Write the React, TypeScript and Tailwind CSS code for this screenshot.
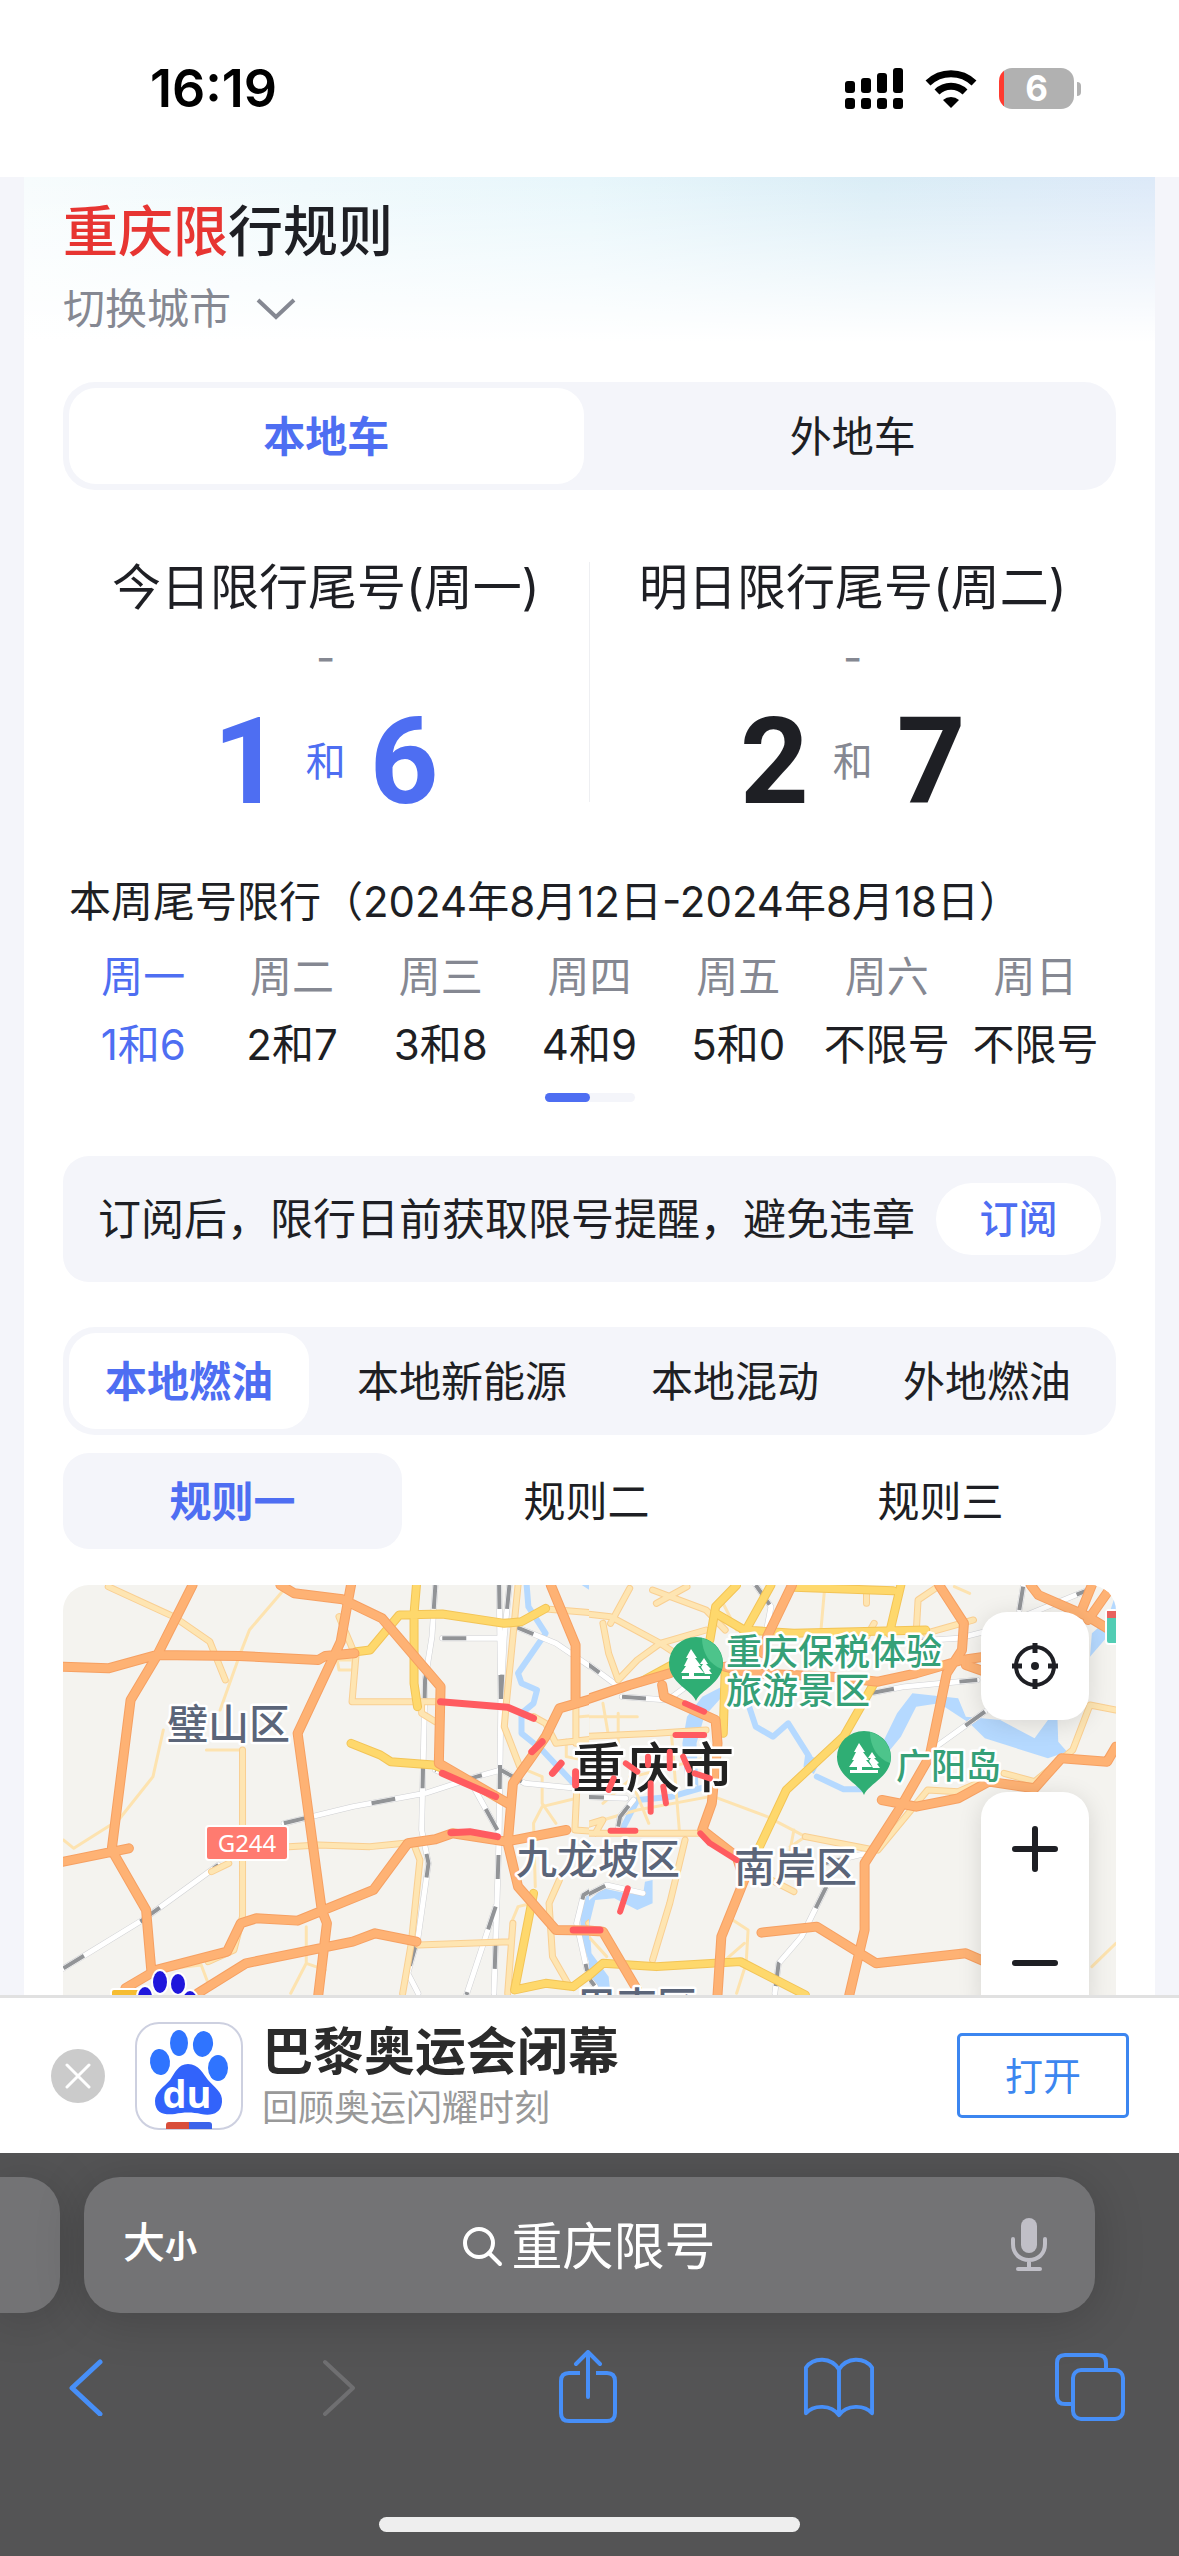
import type { ReactNode } from 'react';

const WEEK = [
  { day: '周一', rule: '1和6' },
  { day: '周二', rule: '2和7' },
  { day: '周三', rule: '3和8' },
  { day: '周四', rule: '4和9' },
  { day: '周五', rule: '5和0' },
  { day: '周六', rule: '不限号' },
  { day: '周日', rule: '不限号' },
];

const VEHICLES = ['本地燃油', '本地新能源', '本地混动', '外地燃油'];
const RULES = ['规则一', '规则二', '规则三'];

const ZOOM_BUTTONS = [
  { label: '放大', d: 'M3 23 H43 M23 3 V43' },
  { label: '缩小', d: 'M3 23 H43' },
];

type Tile = {
  transform: string;
  clip: string;
  water: string[];
  lake: string;
  minor: string[];
  light: string[];
  yellow: string[];
  orange: string[];
  rail: string[];
};

// the map is stored as two tiles, each with its own coordinate grid
const WEST: Tile = {
  transform: 'translate(-3 -15) scale(0.3444 0.3333)',
  clip: 'west',
  water: [
    'M1355 45 L1360 110 L1410 190 L1330 310 L1340 340 L1385 360 L1375 400 L1340 430 L1340 490 L1400 540 L1500 650',
  ],
  lake: 'M1568 950 L1525 975 L1510 1040 L1515 1110 L1540 1190 L1568 1210 L1568 1160 L1540 1110 L1540 1030 L1568 1000Z M1515 45 L1540 62 L1568 55 V45Z',
  minor: [
    'M645 65 L550 180 L520 260 L465 420',
    'M300 480 L270 620 L170 750 L40 835 L10 810',
    'M425 540 H530',
    'M715 1070 V1180 L670 1270 M715 1180 L770 1200',
    'M330 1195 L410 1185 L430 1240',
    'M1330 590 L1400 620 L1400 700 L1440 760 M1400 710 L1500 685 M1400 710 L1375 760 L1380 950',
    'M1470 510 V560 L1520 570 M1510 440 L1568 435',
    'M1310 1060 L1330 1010 L1370 1000',
    'M805 270 H850 V300 H810Z',
  ],
  light: [
    'M140 50 L330 140 L435 215 L480 330',
    'M860 250 L848 395 H1105',
    'M530 540 V1040 L505 1140 L430 1175',
    'M665 830 L750 825 L900 830 L1000 820',
    'M1030 830 L1045 870 L1020 1120 L995 1270',
    'M1040 1125 L1310 1115',
    'M1330 45 L1295 410 L1290 470 L1335 590',
    'M1315 1060 L1300 1270',
    'M1420 118 L1568 130',
    'M1450 930 L1420 1000 L1430 1160 L1480 1250',
    'M810 140 L855 250',
    'M1375 440 L1410 460 L1440 520 L1568 505',
    'M1498 400 V520 M1500 670 L1495 780 L1568 785',
    'M1050 400 L1050 430 L1090 455',
    'M1535 1060 L1568 1040',
    'M440 905 L490 880',
  ],
  yellow: [
    'M1035 45 L1028 130 L1028 340 L1038 410',
    'M860 245 L900 240 L985 135 L1110 132 L1290 160 L1340 155 L1410 115',
    'M845 520 L930 555 L960 575 L1085 585 L1135 605',
    'M1375 970 L1320 1260 L1410 1240 L1490 1250 L1568 1190',
  ],
  orange: [
    'M385 45 L280 260 L205 390 L150 840 L250 1020 L265 1200',
    'M10 290 L140 295 L280 255 L520 258 L750 270 L770 258 L855 250',
    'M10 875 L200 835',
    'M845 45 L835 100 L815 215 L690 490 L760 1020 L775 1060 L750 1275',
    'M640 45 L680 70 L820 88 L935 145 L1105 350 L1100 580 L1300 700',
    'M190 1255 L280 1200 L485 1145 L525 1060 L570 1045 L690 1052 L910 960 L1010 820 L1090 808 L1140 790 L1295 815 L1470 780',
    'M400 1270 L540 1180 L850 1115 L915 1090 L1035 1115',
    'M1425 45 L1497 225 L1497 400',
    'M1568 380 L1450 415 L1410 500 L1370 560 L1315 640 L1300 820 L1330 950 L1440 1080 L1568 1082',
  ],
  rail: [
    'M10 1195 L240 1050 L460 885',
    'M650 760 L850 710 L1060 670 L1210 620 L1280 600',
    'M1090 45 L1080 200 L1060 330 L1050 780 L1070 880 L1040 1100 L1010 1210 L1040 1270',
    'M1275 45 L1280 400 L1275 800 L1260 1270',
    'M1305 45 L1290 200 L1280 400',
    'M1110 205 H1270',
    'M1310 165 L1440 220 L1568 310',
    'M1280 600 L1350 640 L1500 655',
    'M1270 780 L1200 650 L1090 600',
    'M1265 1010 L1180 1275',
    'M1568 945 L1520 975 L1500 1060 L1530 1200 L1568 1240',
  ],
};

const EAST: Tile = {
  transform: 'translate(517 -15) scale(0.382 0.3333)',
  clip: 'east',
  water: [
    'M440 400 L460 470 L505 500 L545 460 L600 560',
    'M330 650 L240 680 L150 690 L110 780',
    'M620 620 L690 658 L740 658',
  ],
  lake: 'M380 345 L320 380 L280 440 L268 520 L275 620 L310 650 L305 520 L325 440 L380 370Z M590 550 L630 572 L612 612 L585 590Z M800 500 L830 430 L870 370 L990 385 L1010 440 L1100 450 L1190 505 L1225 450 L1250 450 L1252 515 L1275 545 L1225 565 L1060 505 L1020 460 L940 400 L880 410 L840 500 L790 570 L770 570Z M1403 70 L1380 150 L1340 190 L1335 260 L1403 170Z M190 930 L190 1000 L150 1020 L90 985 L40 990 L25 1060 L30 1150 L75 1220 L80 1275 L40 1250 L5 1150 L5 1010 L60 955 L120 970 L165 975 L170 935Z',
  minor: [
    'M350 680 L490 740 L590 800',
    'M0 440 H150 M20 430 V560 M100 430 V520 M60 400 L75 500',
    'M60 750 L150 720 L340 680',
    'M240 500 L260 780',
    'M560 780 L550 840 M590 800 L550 830',
    'M1340 1190 L1403 1120',
    'M400 1050 L440 1080 L435 1180 L410 1270',
    'M370 90 L410 180 M640 60 L630 190',
    'M15 1090 L70 1160 M430 1120 L370 1180',
    'M340 560 L140 620 L60 700 M130 620 L180 760',
    'M980 50 L1020 70',
  ],
  light: [
    'M0 130 L80 140 L210 220 L330 180',
    'M60 160 L75 250 L100 330',
    'M130 55 L80 160',
    'M200 100 L280 50 M190 60 L330 120 L380 180 M100 330 L150 270 L210 220 L270 265',
    'M880 190 L885 90 L930 55',
    'M905 190 L1030 150',
    'M590 800 L770 840',
    'M1403 420 L1335 405 L1290 540 L1190 635 L1110 610',
    'M780 840 L910 660 L990 665 L1070 625',
    'M0 790 H310',
    'M275 810 L235 1000 L190 1170',
    'M500 930 L560 965',
    'M0 500 L200 490 L330 480',
    'M750 60 V100 M770 160 L750 200',
    'M0 770 L60 750 L40 790',
  ],
  yellow: [
    'M410 45 L355 110 L340 210',
    'M500 45 L410 230',
    'M355 130 L430 180 L560 190 L905 180',
    'M560 52 L820 62',
    'M840 45 L810 190',
    'M380 300 L375 490',
    'M770 340 L690 500 L540 660 L470 830',
    'M0 1240 L60 1180 L200 1190 L420 1175 L590 1275',
    'M160 335 L240 285',
  ],
  orange: [
    'M0 395 L130 345 L235 310',
    'M215 345 L220 380 L355 450 L360 520 L345 700 L320 780 L410 860 L430 930 L370 1100 L360 1275',
    'M555 45 L490 200 L480 250',
    'M380 290 L450 310 L660 320 L780 335 L880 310 L1000 270 L1060 260',
    'M940 45 L1005 160 L1000 240 L960 310 L915 560 L840 710 L745 880 L745 1080 L705 1275',
    'M790 690 L880 710 L990 685 L1070 635 L1190 655 L1260 565 L1380 575 L1403 530',
    'M475 1088 L620 1070 L775 1180 L1010 1150 L1060 1175',
    'M0 1080 L60 1085 L150 1260',
    'M1180 45 L1200 75 L1330 140 L1380 175',
    'M1340 45 L1310 130 M1385 60 L1330 150',
    'M1010 285 L1060 305',
  ],
  rail: [
    'M0 265 L95 345',
    'M110 380 L230 390 L290 340',
    'M460 45 L500 110 L490 170',
    'M850 215 L990 205 L1060 185 L1180 130 L1330 60',
    'M760 370 L850 350 L1040 330',
    'M1150 120 L1160 50',
    'M1060 425 L920 540',
    'M645 950 L580 1100 L520 1180 L510 1270 M640 880 L750 850',
    'M0 680 L120 685',
    'M100 770 L105 740 L140 690',
    'M10 980 L70 945 L165 970',
    'M0 1190 L40 1250',
  ],
};

const WEST_JAMS = [
  'M1105 395 L1300 412 L1375 445',
  'M1110 610 L1265 680',
  'M1135 788 L1190 785 L1270 800',
  'M1370 545 L1400 515',
  'M1430 610 L1455 580',
  'M1490 1080 H1568',
  'M1497 605 V645',
];

const EAST_JAMS = [
  'M275 400 L325 425',
  'M250 495 H325',
  'M80 782 H145',
  'M315 790 L340 820 L410 870',
  'M125 955 L105 1025',
  'M185 640 V725',
  'M218 650 L225 700',
  'M75 660 L88 625',
  'M120 580 L150 605',
  'M235 545 V595 M178 560 V585',
  'M270 560 L285 600',
  'M300 610 L340 625',
  'M0 1080 H37',
];

function Strokes({ paths, color, width, dash }: { paths: string[]; color: string; width: number; dash?: string }) {
  return (
    <path
      d={paths.join(' ')}
      fill="none"
      stroke={color}
      strokeWidth={width}
      strokeDasharray={dash}
      strokeLinejoin="round"
      strokeLinecap={dash ? 'butt' : 'round'}
      vectorEffect="non-scaling-stroke"
    />
  );
}

function MapTile({ tile }: { tile: Tile }) {
  return (
    <g clipPath={`url(#${tile.clip})`}>
      <g transform={tile.transform}>
        <path d={tile.lake} fill="#b5d9ff" />
        <Strokes paths={tile.water} color="#b5d9ff" width={6} />
        <Strokes paths={tile.minor} color="#fde3b0" width={3} />
        <Strokes paths={tile.rail} color="#cfd0d3" width={6} />
        <Strokes paths={tile.rail} color="#ffffff" width={5} />
        <Strokes paths={tile.rail} color="#929497" width={4} dash="24 66" />
        <Strokes paths={tile.light} color="#f9cf92" width={7} />
        <Strokes paths={tile.light} color="#fee5b2" width={5} />
        <Strokes paths={tile.yellow} color="#f3c456" width={9} />
        <Strokes paths={tile.yellow} color="#fed86c" width={7} />
        <Strokes paths={tile.orange} color="#f6a062" width={10} />
        <Strokes paths={tile.orange} color="#feb274" width={8} />
      </g>
    </g>
  );
}

function MapLabel({ x, y, size, color, children }: { x: number; y: number; size: number; color: string; children: ReactNode }) {
  return (
    <text
      x={x}
      y={y}
      fontSize={size}
      fill={color}
      stroke="#ffffff"
      strokeWidth="5"
      strokeLinejoin="round"
      paintOrder="stroke"
      fontWeight="500"
    >
      {children}
    </text>
  );
}

function ParkPin({ x, y }: { x: number; y: number }) {
  return (
    <g transform={`translate(${x} ${y})`}>
      <path d="M0 38 C-4 27 -27 20 -27 0 A27 26 0 0 1 27 0 C27 20 4 27 0 38Z" fill="#2fae74" />
      <path d="M6 -25 A27 26 0 0 1 26 6 C14 2 6 -10 6 -25Z" fill="#4dc48b" />
      <path d="M-5 -14 L1 -5 H-1 L5 3 H2 L8 10 H-2 V13 H14 V16 H-14 V13 H-7 V10 H-15 L-10 3 H-12 L-8 -5 H-10Z" fill="#fff" />
      <path d="M8 -5 L12 1 H10 L15 6 L13 7 L16 11 H9 L5 4 L7 1 H4Z" fill="#fff" />
    </g>
  );
}

function CityMap() {
  return (
    <svg viewBox="0 0 1053 620" preserveAspectRatio="xMinYMin slice" className="block h-full w-full" role="img" aria-label="重庆限行地图">
      <clipPath id="west">
        <rect width="526" height="620" />
      </clipPath>
      <clipPath id="east">
        <rect x="526" width="527" height="620" />
      </clipPath>
      <rect width="1053" height="620" fill="#f4f3ef" />
      <MapTile tile={WEST} />
      <MapTile tile={EAST} />

      <MapLabel x={104} y={154} size={41} color="#5b6579">璧山区</MapLabel>
      <MapLabel x={453} y={289} size={41} color="#5b6579">九龙坡区</MapLabel>
      <MapLabel x={671} y={297} size={41} color="#5b6579">南岸区</MapLabel>
      <MapLabel x={514} y={436} size={40} color="#5b6579">巴南区</MapLabel>
      <MapLabel x={509} y={203} size={54} color="#222222">重庆市</MapLabel>
      <MapLabel x={663} y={80} size={36} color="#35a077">重庆保税体验</MapLabel>
      <MapLabel x={663} y={119} size={36} color="#35a077">旅游景区</MapLabel>
      <MapLabel x={833} y={194} size={35} color="#35a077">广阳岛</MapLabel>

      <g transform={WEST.transform}>
        <Strokes paths={WEST_JAMS} color="#ff5b60" width={7} />
      </g>
      <g transform={EAST.transform}>
        <Strokes paths={EAST_JAMS} color="#ff5b60" width={6} />
      </g>

      <ParkPin x={633} y={78} />
      <ParkPin x={801} y={172} />

      <rect x="143" y="241" width="82" height="34" rx="3" fill="#ff7b70" stroke="#fff" strokeWidth="2" />
      <text x="184" y="267" fontSize="24" fill="#fff" textAnchor="middle" className="font-['Noto_Sans']">G244</text>

      <rect x="1043" y="25" width="14" height="34" rx="3" fill="#52cdb4" stroke="#fff" strokeWidth="2" />
      <rect x="1044" y="26" width="12" height="7" fill="#e8635f" />

      <rect x="48" y="404" width="30" height="20" rx="3" fill="#f6bd32" stroke="#fff" strokeWidth="2" />
      <g fill="#2017dc" stroke="#fff" strokeWidth="4" paintOrder="stroke">
        <ellipse cx="97" cy="397" rx="7" ry="11" />
        <ellipse cx="115" cy="399" rx="7" ry="10" />
        <ellipse cx="82" cy="412" rx="7" ry="10" />
        <ellipse cx="127" cy="416" rx="7" ry="10" />
        <ellipse cx="105" cy="428" rx="15" ry="14" />
      </g>
    </svg>
  );
}

function StatusBar() {
  return (
    <header className="flex h-[177px] shrink-0 items-center justify-between bg-white pr-[98px] pl-[150px]">
      <time className="text-[52px] leading-[60px] font-semibold text-black">16:19</time>
      <div className="flex items-center gap-[22px]">
        <svg width="58" height="42" viewBox="0 0 58 42" aria-label="信号">
          <rect x="0" y="13" width="10" height="12" rx="3" />
          <rect x="16" y="10" width="10" height="15" rx="3" />
          <rect x="32" y="5" width="10" height="20" rx="3" />
          <rect x="48" y="0" width="10" height="25" rx="3" />
          <rect x="0" y="30" width="10" height="11" rx="3" />
          <rect x="16" y="30" width="10" height="11" rx="3" />
          <rect x="32" y="30" width="10" height="11" rx="3" />
          <rect x="48" y="30" width="10" height="11" rx="3" />
        </svg>
        <svg width="52" height="38" viewBox="0 0 52 38" aria-label="无线网络">
          <path d="M3 13 A33 33 0 0 1 49 13" fill="none" stroke="#000" strokeWidth="7" />
          <path d="M12 22 A20 20 0 0 1 40 22" fill="none" stroke="#000" strokeWidth="7" />
          <path d="M26 38 L18 30 A12 12 0 0 1 34 30Z" />
        </svg>
        <div className="flex items-center gap-[3px]">
          <span className="flex h-[41px] w-[75px] items-center justify-center rounded-[13px] bg-[linear-gradient(to_right,#ff3b30_5px,#b1b1b1_5px)] text-[35px] leading-[41px] font-bold text-white">
            6
          </span>
          <span className="h-[14px] w-[4px] rounded-r-full bg-[#b1b1b1]" />
        </div>
      </div>
    </header>
  );
}

function DayCard({ title, numbers, active }: { title: string; numbers: [string, string]; active?: boolean }) {
  return (
    <div className="flex flex-col items-center">
      <h2 className="text-[49px] leading-[52px]">{title}</h2>
      <p className="mt-5 text-[42px] leading-[48px] text-[#858892]">-</p>
      <p className={active ? 'mt-[40px] flex items-center gap-[24px] text-[#4e6ef2]' : 'mt-[40px] flex items-center gap-[24px]'}>
        <b className="w-[70px] text-right font-['Roboto'] text-[120px] leading-[80px] font-bold">{numbers[0]}</b>
        <span className={active ? 'text-[40px] leading-[80px]' : 'text-[40px] leading-[80px] text-[#858892]'}>和</span>
        <b className="w-[70px] font-['Roboto'] text-[120px] leading-[80px] font-bold">{numbers[1]}</b>
      </p>
    </div>
  );
}

function AppBanner() {
  return (
    <aside className="flex h-[158px] shrink-0 items-center border-t-[3px] border-[#e1e1e1] bg-white pr-[50px] pl-[51px]">
      <button aria-label="关闭" className="flex size-[54px] items-center justify-center rounded-full bg-[#cbcbcb]">
        <svg width="26" height="26" viewBox="0 0 26 26" fill="none" stroke="#fff" strokeWidth="3" strokeLinecap="round">
          <path d="M2 2 L24 24 M24 2 L2 24" />
        </svg>
      </button>
      <svg width="108" height="108" viewBox="0 0 108 108" className="ml-[30px]" aria-label="百度">
        <rect x="1" y="1" width="106" height="106" rx="23" fill="#fff" stroke="#cdd0e0" strokeWidth="2" />
        <g fill="#2f74ff">
          <ellipse cx="44" cy="21" rx="9" ry="13" />
          <ellipse cx="68" cy="22" rx="10" ry="13" transform="rotate(8 68 22)" />
          <ellipse cx="25" cy="40" rx="10" ry="13" transform="rotate(-6 25 40)" />
          <ellipse cx="83" cy="46" rx="10" ry="13" />
        </g>
        <path d="M53 42 C64 42 68 52 73 58 C79 65 88 70 87 80 C86 92 76 94 66 92 C58 90 48 90 40 92 C30 93 20 92 20 79 C20 70 29 65 35 58 C40 51 43 42 53 42Z" fill="#3263fb" />
        <text x="52" y="86" fontSize="38" fontWeight="700" fill="#fff" textAnchor="middle" className="font-['Open_Sans']">du</text>
        <path d="M31 107 V103 Q31 100 34 100 H54 V107Z" fill="#d94e3a" />
        <path d="M54 100 H74 Q77 100 77 103 V107 H54Z" fill="#3b63ea" />
      </svg>
      <div className="ml-[19px] flex-1 pt-[7px]">
        <p className="text-[51px] leading-[58px] font-bold text-[#2b2b2b]">巴黎奥运会闭幕</p>
        <p className="text-[36px] leading-[54px] text-[#999999]">回顾奥运闪耀时刻</p>
      </div>
      <button className="h-[85px] w-[172px] rounded-[5px] border-[3px] border-[#3c86f0] text-[38px] leading-[40px] text-[#3c86f0]">打开</button>
    </aside>
  );
}

function BrowserBar() {
  return (
    <footer className="shrink-0 overflow-hidden bg-[#545455] pb-[24px]">
      <div className="flex gap-[24px] pt-[24px] pr-[84px]">
        <div className="h-[136px] w-[60px] rounded-r-[36px] bg-[#737375] shadow-[0_6px_50px_rgba(0,0,0,0.18)]" />
        <div className="grid h-[136px] flex-1 grid-cols-[1fr_auto_1fr] items-center rounded-[36px] bg-[#737375] px-[39px] text-white shadow-[0_6px_50px_rgba(0,0,0,0.18)]">
          <button aria-label="页面设置" className="flex items-baseline">
            <span className="text-[42px] leading-[60px] font-medium">大</span>
            <span className="text-[32px] leading-[60px] font-bold">小</span>
          </button>
          <label className="flex items-center gap-[8px] pt-1">
            <svg width="42" height="42" viewBox="0 0 42 42" fill="none" stroke="#fff" strokeWidth="4" strokeLinecap="round" aria-hidden="true">
              <circle cx="17" cy="17" r="14" />
              <path d="M27 27 L38 38" />
            </svg>
            <input type="text" aria-label="搜索" defaultValue="重庆限号" className="w-[206px] bg-transparent text-[51px] leading-[68px] outline-none" />
          </label>
          <button aria-label="语音输入" className="mr-[9px] justify-self-end">
            <svg width="36" height="54" viewBox="0 0 36 54" fill="none" stroke="#c0bfc7" strokeLinecap="round">
              <rect x="10" y="0" width="16" height="35" rx="8" fill="#c0bfc7" stroke="none" />
              <path d="M2 21 V26 C2 36 9 42 18 42 C27 42 34 36 34 26 V21 M18 42 V51" strokeWidth="4" />
              <path d="M7 51 H29" strokeWidth="4" />
            </svg>
          </button>
        </div>
      </div>
      <nav aria-label="浏览器" className="mt-[36px] flex h-[76px] items-center justify-between pr-[54px] pl-[51px]">
        <button aria-label="后退" className="flex w-[70px] justify-center">
          <svg width="36" height="58" viewBox="0 0 36 58" fill="none" stroke="#478ff8" strokeWidth="5" strokeLinecap="round" strokeLinejoin="round">
            <path d="M32 4 L4 30 L32 56" />
          </svg>
        </button>
        <button aria-label="前进" disabled className="flex w-[70px] justify-center">
          <svg width="36" height="58" viewBox="0 0 36 58" fill="none" stroke="#6f6f71" strokeWidth="4" strokeLinecap="round" strokeLinejoin="round">
            <path d="M6 4 L34 30 L6 56" />
          </svg>
        </button>
        <button aria-label="分享" className="flex w-[70px] justify-center">
          <svg width="58" height="74" viewBox="0 0 58 74" fill="none" stroke="#478ff8" strokeWidth="4" strokeLinecap="round" strokeLinejoin="round">
            <path d="M21 23 H10 Q2 23 2 31 V63 Q2 71 10 71 H48 Q56 71 56 63 V31 Q56 23 48 23 H37" strokeLinecap="butt" />
            <path d="M29 47 V2 M17 14 L29 2 L41 14" />
          </svg>
        </button>
        <button aria-label="书签" className="flex w-[70px] justify-center">
          <svg width="70" height="62" viewBox="0 0 72 62" fill="none" stroke="#478ff8" strokeWidth="4" strokeLinejoin="round">
            <path d="M36 13 C28 0 10 0 2 11 V58 C10 49 28 49 36 60 C44 49 62 49 70 58 V11 C62 0 44 0 36 13 V60" />
          </svg>
        </button>
        <button aria-label="标签页" className="flex w-[70px] justify-center">
          <svg width="70" height="68" viewBox="0 0 70 68" fill="none" stroke="#478ff8" strokeWidth="4">
            <path d="M51 17 V10 Q51 2 43 2 H10 Q2 2 2 10 V43 Q2 51 10 51 H17" />
            <rect x="18" y="17" width="50" height="49" rx="8" />
          </svg>
        </button>
      </nav>
      <div className="mx-auto mt-[92px] h-[15px] w-[421px] rounded-full bg-[#eeeeee]" />
    </footer>
  );
}

export default function App() {
  return (
    <div className="flex h-screen flex-col overflow-hidden bg-[#f4f5fa] font-['Inter','Noto_Sans_CJK_SC',sans-serif] text-[#1e1f24]">
      <StatusBar />

      <main className="min-h-0 flex-1 overflow-hidden px-[24px]">
        <div className="bg-white bg-[linear-gradient(to_bottom,rgba(255,255,255,0),#ffffff_165px),linear-gradient(to_right,#f7fcfd,#e7f6fb_50%,#daedf6_75%,#dce9f8)] px-[39px] pt-[22px]">
          <h1 className="text-[55px] leading-[64px] font-medium">
            <span className="text-[#e73532]">重庆限</span>行规则
          </h1>
          <button className="mt-[16px] flex items-center gap-[25px] text-[42px] leading-[60px] text-[#858892]">
            切换城市
            <svg width="40" height="22" viewBox="0 0 40 22" fill="none" stroke="#858892" strokeWidth="4">
              <path d="M2 2 L20 19 L38 2" />
            </svg>
          </button>

          <div className="mt-[43px] grid h-[108px] grid-cols-2 gap-[12px] rounded-[32px] bg-[#f4f5fa] p-[6px] text-[42px]">
            <button className="rounded-[27px] bg-white font-bold text-[#4e6ef2]">本地车</button>
            <button>外地车</button>
          </div>

          <section className="mt-[72px] grid grid-cols-2 divide-x divide-[#eeeff2]">
            <DayCard title="今日限行尾号(周一)" numbers={['1', '6']} active />
            <DayCard title="明日限行尾号(周二)" numbers={['2', '7']} />
          </section>

          <h2 className="mt-[70px] pl-[6px] text-[42px] leading-[60px]">本周尾号限行（2024年8月12日-2024年8月18日）</h2>
          <div className="mt-[11px] px-[6px]">
            <table className="w-full table-fixed text-center text-[42px] leading-[68px]">
              <thead>
                <tr>
                  {WEEK.map(({ day }, i) => (
                    <th key={day} className={i === 0 ? 'p-0 font-normal text-[#4e6ef2]' : 'p-0 font-normal text-[#858892]'}>
                      {day}
                    </th>
                  ))}
                </tr>
              </thead>
              <tbody>
                <tr>
                  {WEEK.map(({ day, rule }, i) => (
                    <td key={day} className={i === 0 ? 'p-0 whitespace-nowrap text-[#4e6ef2]' : 'p-0 whitespace-nowrap'}>
                      {rule}
                    </td>
                  ))}
                </tr>
              </tbody>
            </table>
          </div>
          <div className="mx-auto mt-[14px] h-[9px] w-[90px] rounded-full bg-[#f4f5fa]">
            <div className="h-full w-1/2 rounded-full bg-[#4e6ef2]" />
          </div>

          <section className="mt-[54px] flex h-[126px] items-center justify-between rounded-[26px] bg-[#f4f5fa] pr-[15px] pl-[35px]">
            <p className="text-[43px] leading-[60px] whitespace-nowrap">订阅后，限行日前获取限号提醒，避免违章</p>
            <button className="h-[72px] w-[165px] rounded-full bg-white text-[39px] font-medium text-[#4e6ef2]">订阅</button>
          </section>

          <div className="mt-[45px] flex h-[108px] justify-between rounded-[32px] bg-[#f4f5fa] py-[6px] pr-[9px] pl-[6px] text-[42px] whitespace-nowrap">
            {VEHICLES.map((name, i) => (
              <button key={name} className={i === 0 ? 'rounded-[27px] bg-white px-[36px] font-bold text-[#4e6ef2]' : 'px-[36px]'}>
                {name}
              </button>
            ))}
          </div>

          <div className="mt-[18px] grid h-[96px] grid-cols-3 gap-[15px] pr-[6px] text-[42px]">
            {RULES.map((name, i) => (
              <button key={name} className={i === 0 ? 'rounded-[26px] bg-[#f4f5fa] font-bold text-[#4e6ef2]' : ''}>
                {name}
              </button>
            ))}
          </div>

          <section className="relative mt-[36px] h-[620px] overflow-hidden rounded-[26px]">
            <CityMap />
            <div className="absolute top-[27px] right-[27px] flex w-[108px] flex-col gap-[72px]">
              <button aria-label="定位" className="flex h-[108px] items-center justify-center rounded-[26px] bg-white shadow-[0_4px_24px_rgba(0,0,0,0.12)]">
                <svg width="46" height="46" viewBox="0 0 46 46" fill="none" stroke="#1e1f24" strokeWidth="4">
                  <circle cx="23" cy="23" r="19" />
                  <path d="M23 0 V10 M23 36 V46 M0 23 H10 M36 23 H46" strokeWidth="5" />
                  <circle cx="23" cy="23" r="4" fill="#1e1f24" stroke="none" />
                </svg>
              </button>
              <div className="flex flex-col overflow-hidden rounded-[26px] bg-white shadow-[0_4px_24px_rgba(0,0,0,0.12)]">
                {ZOOM_BUTTONS.map(({ label, d }) => (
                  <button key={label} aria-label={label} className="flex h-[114px] items-center justify-center">
                    <svg width="46" height="46" viewBox="0 0 46 46" fill="none" stroke="#1e1f24" strokeWidth="6" strokeLinecap="round">
                      <path d={d} />
                    </svg>
                  </button>
                ))}
              </div>
            </div>
          </section>
        </div>
      </main>

      <AppBanner />
      <BrowserBar />
    </div>
  );
}
